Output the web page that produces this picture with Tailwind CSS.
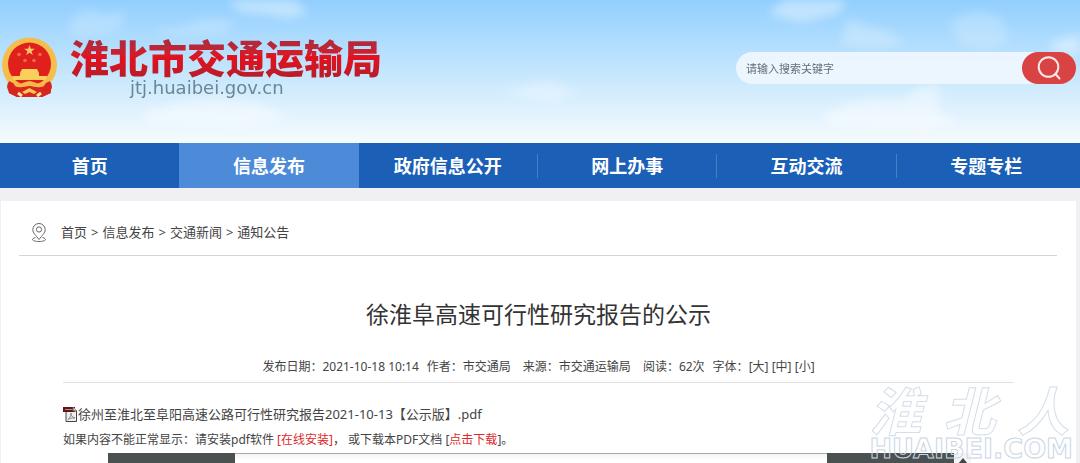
<!DOCTYPE html>
<html lang="zh-CN">
<head>
    <meta charset="UTF-8">
    <meta name="viewport" content="width=device-width, initial-scale=1.0">
    <title>淮北市交通运输局</title>
    <script src="https://cdn.jsdelivr.net/npm/@tailwindcss/browser@4"></script>
</head>
<body class="relative h-screen overflow-hidden bg-[#f0f0f3] font-['Noto_Sans','Noto_Sans_CJK_SC',sans-serif] text-[#444]">
    <!-- Header -->
    <header class="relative overflow-hidden bg-linear-to-b from-[#92cffe] via-[#c4e6fd] to-[#f6fbfe]">
        <svg class="absolute inset-0 w-full h-full" viewBox="0 0 1080 143" preserveAspectRatio="none" aria-hidden="true">
            <defs>
                <filter id="soft" x="-30%" y="-30%" width="160%" height="160%"><feGaussianBlur stdDeviation="5"/></filter>
            </defs>
            <g fill="#fff" filter="url(#soft)">
                <path d="M228 0H295L308 13L290 18L262 14L240 12Z" opacity=".4"/>
                <path d="M70 20L85 8L108 14L125 10L120 30L95 36L72 36Z" opacity=".2"/>
                <path d="M150 30L180 28L205 18L235 20L225 34L170 36Z" opacity=".2"/>
                <path d="M768 14L784 0H846L840 12L820 18L800 22Z" opacity=".4"/>
                <path d="M848 18L868 26L885 30L908 44L870 48L840 44Z" opacity=".25"/>
                <path d="M950 20L975 10L1000 16L1010 40L990 50L958 44Z" opacity=".2"/>
                <path d="M1050 42L1080 34V54H1055Z" opacity=".4"/>
                <path d="M820 118L840 106L870 98L905 100L915 88L940 84L938 112L960 120L930 130L840 128Z" opacity=".4"/>
                <path d="M140 112L190 100L215 98L255 102L290 116L250 128L150 124Z" opacity=".4"/>
                <path d="M500 92L545 80L580 92L550 102Z" opacity=".3"/>
            </g>
        </svg>
        <div class="relative flex h-[143px] items-center justify-between pr-1">
            <a href="#" class="flex items-center">
                <svg class="mt-[-8px] h-[61px] w-[59px]" viewBox="0 0 59 61" aria-label="国徽">
                    <path d="M9 40H50L52 50L50 56L42 60H17L9 56L7 50Z" fill="#d8261f"/>
                    <circle cx="29.500" cy="28" r="27.500" fill="#f4bd4c"/>
                    <path d="M9 44C18 50 41 50 50 44L51 56L42 60H17L9 56Z" fill="#d8261f"/>
                    <circle cx="29.500" cy="27" r="21.500" fill="#e0201c"/>
                    <path d="M29.500 8l1.300 3.800h4l-3.200 2.400 1.200 3.900-3.300-2.400-3.300 2.400 1.200-3.900-3.200-2.400h4z" fill="#fbc768"/>
                    <g fill="#ee6a48">
                        <circle cx="19" cy="17.500" r="1.800"/><circle cx="40" cy="17.500" r="1.800"/>
                        <circle cx="25" cy="23.500" r="1.800"/><circle cx="34" cy="23.500" r="1.800"/>
                    </g>
                    <path d="M22 32H37L39 36V39H47L46 43H13L12 39H20V36Z" fill="#fbcf5c"/>
                    <path d="M12 44C20 50 25 44 29.500 44S39 50 47 44L44 49C38 52 34 49 29.500 49S21 52 15 49Z" fill="#f6b748"/>
                    <path d="M22 55L29.500 51L37 55L34 57L29.500 55L25 57Z" fill="#f8c758"/>
                    <path d="M18 56l4 3M41 56l-4 3" stroke="#fbe3a0" stroke-width="3"/>
                </svg>
                <div class="ml-[11px] mt-[-10px]">
                    <h1 class="bg-linear-to-b from-[#b5283a] from-20% via-[#e3101c] via-50% to-[#b81c2a] to-95% bg-clip-text text-[39px] font-black leading-[42px] text-transparent">淮北市交通运输局</h1>
                    <p class="pl-[60px] font-['DejaVu_Sans',sans-serif] text-[18px] leading-[18px] text-[#6a8796]">jtj.huaibei.gov.cn</p>
                </div>
            </a>
            <form class="mt-[-8px] flex h-8 w-[340px] rounded-full bg-[#eff7fe]/90" role="search">
                <input type="text" aria-label="搜索" placeholder="请输入搜索关键字" class="min-w-0 flex-1 bg-transparent px-[10px] pt-1 text-[11px] outline-none placeholder:text-[#666d78]">
                <button type="submit" aria-label="搜索" class="flex h-8 w-[54px] items-center justify-center rounded-full bg-[#d94343] text-[#fde8e8]">
                    <svg class="h-6 w-6" viewBox="0 0 24 24" fill="none" stroke="currentColor" stroke-width="2" stroke-linecap="round">
                        <circle cx="11.500" cy="11" r="9.800"/>
                        <path d="M18.500 18l4 4.500"/>
                    </svg>
                </button>
            </form>
        </div>
    </header>

    <!-- Navigation -->
    <nav class="bg-[#1b60b6] pr-1 text-center text-[18px] font-bold text-white">
        <ul class="flex h-[45px] items-center leading-[45px]">
            <li class="flex-1"><a href="#" class="block pt-px">首页</a></li>
            <li class="h-full flex-1 bg-[#4d8bd9]"><a href="#" class="block pt-px">信息发布</a></li>
            <li class="flex flex-1 items-center"><a href="#" class="block flex-1 pt-px">政府信息公开</a><span class="h-6 w-px bg-[#4380ca]"></span></li>
            <li class="flex flex-1 items-center"><a href="#" class="block flex-1 pt-px">网上办事</a><span class="h-6 w-px bg-[#4380ca]"></span></li>
            <li class="flex flex-1 items-center"><a href="#" class="block flex-1 pt-px">互动交流</a><span class="h-6 w-px bg-[#4380ca]"></span></li>
            <li class="flex-1"><a href="#" class="block pt-px">专题专栏</a></li>
        </ul>
    </nav>

    <!-- Content -->
    <main class="mt-[13px] ml-px mr-1 bg-white">
        <div class="ml-[18px] mr-[19px] flex h-[55px] items-center border-b border-[#d5d5d5] pt-[9px] pl-[13px] text-[13px]">
            <svg class="mr-[15px] h-[19px] w-[14px]" viewBox="0 0 14 19" fill="none" stroke="#666" stroke-width="1">
                <path d="M7 16.500C4 12.500 .8 10 .8 6.700a6.200 6.200 0 0 1 12.400 0C13.200 10 10 12.500 7 16.500Z"/>
                <circle cx="7" cy="6.500" r="2.600"/>
                <path d="M3.500 14.500C1.500 15 .5 15.800.5 16.600S3 18.500 7 18.500s6.500-1 6.500-1.900-1-1.600-3-2.100"/>
            </svg>
            <p class="flex gap-1">
                <a href="#">首页</a><span>&gt;</span><a href="#">信息发布</a><span>&gt;</span><a href="#">交通新闻</a><span>&gt;</span><a href="#">通知公告</a>
            </p>
        </div>

        <article class="ml-[62px] mr-[62px]">
            <h2 class="pt-[38px] text-center text-[23px] leading-[40px] text-[#333]">徐淮阜高速可行性研究报告的公示</h2>
            <div class="mt-[23px] flex justify-center gap-2 border-b border-[#e2e2e2] pb-[5px] text-[12px] leading-5">
                <span>发布日期：2021-10-18 10:14</span>
                <span>作者：市交通局</span>
                <span class="ml-1">来源：市交通运输局</span>
                <span class="ml-1">阅读：62次</span>
                <span>字体：<a href="#">[大]</a> <a href="#">[中]</a> <a href="#">[小]</a></span>
            </div>
            <div class="pt-[18px] leading-[26px]">
                <p class="flex items-center text-[13px]">
                    <svg class="h-4 w-[15px]" viewBox="0 0 15 16">
                        <path d="M3 1.500H10.500L13.500 4.500V15.500H3Z" fill="#eee" stroke="#444"/>
                        <path d="M0 1H12V6H0Z" fill="#5d1715"/>
                        <path d="M2 3.500H10" stroke="#b98a86"/>
                        <path d="M10 1V5H14" fill="#ddd" stroke="#555"/>
                        <path d="M5 13.500C7.500 11 8.500 8 8 7C7.500 8.500 9 11.500 12 12C9 11.500 6.500 12.500 5 13.500Z" fill="none" stroke="#888"/>
                    </svg>
                    <a href="#">徐州至淮北至阜阳高速公路可行性研究报告2021-10-13【公示版】.pdf</a>
                </p>
                <p class="text-[12px]">如果内容不能正常显示：请安装pdf软件 <a href="#" class="text-[#dc2a2a]">[在线安装]</a>， 或下载本PDF文档 [<a href="#" class="text-[#dc2a2a]">点击下载</a>]。</p>
            </div>
        </article>

        <!-- PDF viewer -->
        <div class="ml-[107px] mr-[105px] flex h-8">
            <div class="w-[127px] bg-[#4b5150]"></div>
            <div class="flex-1 border-t border-[#aaa] bg-linear-to-b from-[#f3f3f3] to-white to-20%"></div>
            <div class="w-[127px] bg-[#4b5150]"></div>
            <div class="flex w-[17px] justify-center bg-[#f4f4f4] pt-[5px]">
                <svg class="h-[6px] w-[10px]" viewBox="0 0 10 6"><path d="M0 6L5 0L10 6Z" fill="#444"/></svg>
            </div>
        </div>
    </main>

    <!-- Watermark -->
    <div class="pointer-events-none absolute right-[7px] bottom-px text-transparent" aria-hidden="true">
        <p class="flex justify-between pr-1 font-['Noto_Sans_CJK_SC',sans-serif] text-[52px] font-bold italic leading-[54px] [-webkit-text-stroke:1px_#d3deeb]"><span>淮</span><span>北</span><span>人</span></p>
        <p class="font-['DejaVu_Sans',sans-serif] text-[27px] font-bold leading-[26px] [-webkit-text-stroke:1px_#c9d6e5]">HUAIBEI.COM</p>
    </div>
</body>
</html>
